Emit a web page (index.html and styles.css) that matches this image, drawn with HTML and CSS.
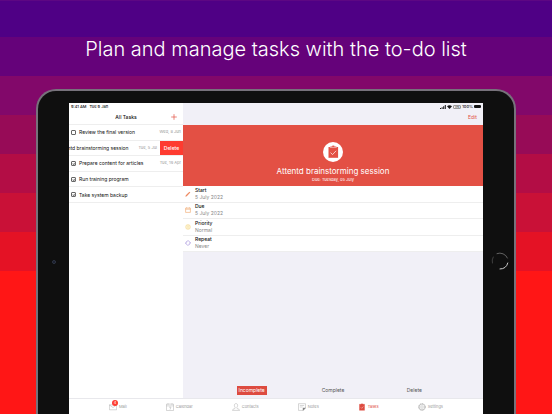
FILE: index.html
```html
<!DOCTYPE html>
<html lang="en">
  <head>
    <meta charset="UTF-8" />
    <meta name="viewport" content="width=device-width, initial-scale=1.0" />
    <title>Tasks</title>
    <link rel="stylesheet" href="styles.css">
  </head>
  <body>
    <h1 class="headline">Plan and manage tasks with the to-do list</h1>

    <div class="tablet">
      <span class="camera"></span>
      <svg class="home-button" viewBox="0 0 18 18" fill="none" stroke-linecap="round">
        <path d="M6 1.6A8 8 0 0 1 16.4 6" stroke="#777" stroke-width=".8" />
        <path d="M16.8 11A8 8 0 0 1 9 17" stroke="#ccc" stroke-width="1" />
        <path d="M1.4 11A8 8 0 0 1 2.2 5" stroke="#555" stroke-width=".7" />
      </svg>

      <div class="screen">
        <div class="panes">
          <section class="list-pane">
            <div class="status"><span>9:41 AM</span><span>Tue 9 Jan</span></div>
            <header class="bar">
              <h2>All Tasks</h2>
              <button class="add" aria-label="Add task">
                <svg viewBox="0 0 6 6" stroke="#e35044" stroke-width=".7"><path d="M3 .2v5.6M.2 3h5.6" /></svg>
              </button>
            </header>
            <ul class="tasks">
              <li>
                <input type="checkbox" id="task1">
                <label for="task1">Review the final version</label>
                <time>Wed, 8 Jun</time>
              </li>
              <li class="swiped">
                <span class="name">Attentd brainstorming session</span>
                <time>Tue, 5 Jul</time>
                <button class="delete">Delete</button>
              </li>
              <li>
                <input type="checkbox" id="task3" checked>
                <label for="task3">Prepare content for articles</label>
                <time>Tue, 19 Apr</time>
              </li>
              <li>
                <input type="checkbox" id="task4" checked>
                <label for="task4">Run training program</label>
              </li>
              <li>
                <input type="checkbox" id="task5" checked>
                <label for="task5">Take system backup</label>
              </li>
            </ul>
          </section>

          <section class="detail-pane">
            <div class="status status-right">
              <svg class="signal" viewBox="0 0 6 4" fill="#111"><path d="M0 3h1v1H0zM1.6 2.2h1V4h-1zM3.2 1.2h1V4h-1zM4.8 0h1v4h-1z" /></svg>
              <svg class="wifi" viewBox="0 0 5 4" fill="#111"><path d="M0 1.2Q2.5-.8 5 1.2L2.5 4z" /></svg>
              <span class="vpn">VPN</span>
              <span>100%</span>
              <span class="battery"></span>
            </div>
            <header class="bar">
              <button class="edit">Edit</button>
            </header>
            <div class="hero">
              <span class="hero-icon">
                <svg viewBox="0 0 20 20">
                  <path d="M5.5 5h9.6v10.8H5.5z" fill="#e35044" />
                  <path d="M7.2 5.4V4.2h1.5Q10.3 2.4 11.8 4.2h1.6v1.2z" fill="#e35044" stroke="#fff" stroke-width=".5" />
                  <path d="M7.6 10.6l1.9 2 3.6-3.8" fill="none" stroke="#fff" stroke-width=".7" />
                </svg>
              </span>
              <h3>Attentd brainstorming session</h3>
              <p>Due: Tuesday, 05 July</p>
            </div>
            <dl class="fields">
              <div>
                <svg viewBox="0 0 6 6"><path d="M.4 5.7l.4-1.5L4.4.7l.9.8L1.8 5.2z" fill="#ee8a62" /></svg>
                <dt>Start</dt>
                <dd>5 July 2022</dd>
              </div>
              <div>
                <svg viewBox="0 0 6 6" fill="none" stroke="#f0a566" stroke-width=".6"><path d="M.6 1.1h4.8v4.3H.6zM.6 2.2h4.8M1.6.3v.8M4.4.3v.8" /></svg>
                <dt>Due</dt>
                <dd>5 July 2022</dd>
              </div>
              <div>
                <svg viewBox="0 0 6 6" fill="#fdf3d0" stroke="#f3d58a" stroke-width=".5"><circle cx="3" cy="3" r="2.4" /><path d="M3 1.6v2M3 4v.5" /></svg>
                <dt>Priority</dt>
                <dd>Normal</dd>
              </div>
              <div>
                <svg viewBox="0 0 6 6" fill="none" stroke="#9a84d6" stroke-width=".6"><path d="M.9 3.4A2.2 2.2 0 0 1 4.7 1.6M5.1 2.6A2.2 2.2 0 0 1 1.3 4.4M.2 2.8l.7.8.8-.8M5.8 3.2l-.7-.8-.8.8" /></svg>
                <dt>Repeat</dt>
                <dd>Never</dd>
              </div>
            </dl>
            <div class="actions">
              <button class="active">Incomplete</button>
              <button>Complete</button>
              <button>Delete</button>
            </div>
          </section>
        </div>

        <nav class="tabs">
          <a href="#mail">
            <svg viewBox="0 0 8 8"><path d="M.4 1.9h7.2v4.9H.4zM.4 1.9L4 4.6l3.6-2.7" /></svg>
            Mail
            <span class="badge">4</span>
          </a>
          <a href="#calendar">
            <svg viewBox="0 0 8 8"><path d="M.5 1.1h7v6.4h-7zM.5 2.9h7M2 .3v1.4M6 .3v1.4M3 4.2h2L4 6.6" /></svg>
            Calendar
          </a>
          <a href="#contacts">
            <svg viewBox="0 0 8 8"><path d="M4 .6C2.6.6 2.3 1.6 2.4 2.7c.1 1 .5 1.5.8 1.9.1.7-.2.9-1 1.2C1 6.2.5 6.6.4 7.4h7.2C7.5 6.6 7 6.2 5.8 5.8 5 5.5 4.7 5.3 4.8 4.6c.3-.4.7-.9.8-1.9C5.7 1.6 5.4.6 4 .6z" /></svg>
            Contacts
          </a>
          <a href="#notes">
            <svg viewBox="0 0 8 8"><path d="M.5.7h7v4.2L5 7.4H.5zM1.8 2.5h4.4M1.8 4h3" /><path d="M5 7.4V5h2.5z" fill="#888" stroke="#777" /></svg>
            Notes
          </a>
          <a href="#tasks" class="current">
            <svg viewBox="0 0 8 8"><path d="M1.5 1.3h1.2Q4 0 5.3 1.3h1.2v6h-5z" fill="#dd4b40" stroke="#dd4b40" /><path d="M2.8 4.4l.9.9 1.7-1.8" stroke="#fff" /></svg>
            Tasks
          </a>
          <a href="#settings">
            <svg viewBox="0 0 8 8"><circle cx="4" cy="4" r="3.3" stroke-width=".7" stroke-dasharray="1.5 .6" /><circle cx="4" cy="4" r="2.8" /><circle cx="4" cy="4" r="1.3" /></svg>
            Settings
          </a>
        </nav>
      </div>
    </div>
  </body>
</html>
```

FILE: styles.css
```css
* {
  box-sizing: border-box;
  margin: 0;
  padding: 0;
}

body {
  min-height: 100vh;
  display: flex;
  flex-direction: column;
  font-family: Inter, "Liberation Sans", sans-serif;
  font-size: 5px;
  line-height: 8px;
  color: #111;
  background: linear-gradient(
    #5d0783 0 1px,
    #4f0085 1px 37px,
    #65027a 37px 76px,
    #82086a 76px 115px,
    #970b57 115px 154px,
    #b30d45 154px 193px,
    #c91137 193px 232px,
    #e41225 232px 271px,
    #ff1616 271px
  );
}

button {
  border: none;
  background: none;
  font: inherit;
  color: inherit;
  cursor: pointer;
}

svg {
  display: block;
  flex: none;
}

.headline {
  height: 89px;
  padding-top: 36px;
  font-size: 20px;
  line-height: 26px;
  font-weight: 300;
  text-align: center;
  color: #fff;
}

.tablet {
  position: relative;
  flex: 1;
  display: flex;
  margin: 0 36px;
  padding: 12px 31px 0;
  border: 2px solid #77727b;
  border-bottom: none;
  border-radius: 20px 20px 0 0;
  background: #0f0f0f;
}

.camera {
  position: absolute;
  left: 14px;
  top: 169px;
  width: 4px;
  height: 4px;
  border: 1px solid #303645;
  border-radius: 50%;
  background: #15192a;
}

.home-button {
  position: absolute;
  right: 5px;
  top: 161px;
  width: 18px;
  height: 18px;
}

.screen {
  flex: 1;
  display: flex;
  flex-direction: column;
  background: #fff;
}

.panes {
  flex: 1;
  display: flex;
}

.list-pane {
  width: 114px;
  overflow: hidden;
}

.detail-pane {
  flex: 1;
  display: flex;
  flex-direction: column;
  background: #f1f0f7;
}

.status {
  display: flex;
  gap: 3px;
  height: 7px;
  padding: 0 2px;
  font-size: 4px;
  line-height: 7px;
  font-weight: 500;
}

.status-right {
  justify-content: flex-end;
  align-items: center;
  gap: 1px;
}

.signal {
  width: 6px;
  height: 4px;
}

.wifi {
  width: 5px;
  height: 4px;
}

.vpn {
  padding: 0 1px;
  border: 1px solid #999;
  border-radius: 1px;
  font-size: 2px;
  line-height: 2px;
}

.battery {
  width: 7px;
  height: 3px;
  border-radius: 1px;
  background: #111;
}

.bar {
  position: relative;
  display: flex;
  justify-content: center;
  height: 15px;
  line-height: 14px;
}

.list-pane .bar {
  border-bottom: 1px solid #eee;
}

.bar h2 {
  font-size: 5px;
  font-weight: 500;
}

.add,
.edit {
  position: absolute;
  right: 6px;
  top: 0;
  height: 14px;
  color: #e35044;
}

.add svg {
  width: 6px;
  height: 6px;
}

.tasks {
  display: grid;
  grid-template-columns: minmax(0, 1fr);
  grid-auto-rows: 1fr;
  height: 78px;
  list-style: none;
}

.tasks li {
  display: flex;
  align-items: center;
  gap: 3px;
  padding: 0 2px;
  border-bottom: 1px solid #eee;
  white-space: nowrap;
}

.tasks input {
  appearance: none;
  position: relative;
  flex: none;
  width: 5px;
  height: 5px;
  border: 1px solid #666;
  border-radius: 1px;
}

.tasks input:checked::after {
  content: "";
  position: absolute;
  left: 1px;
  top: 0;
  width: 1px;
  height: 2px;
  border: solid #888;
  border-width: 0 1px 1px 0;
  transform: rotate(45deg);
}

.tasks time {
  margin-left: auto;
  font-size: 4px;
  color: #999;
}

/* the row is pulled left to show its delete button */
.tasks .swiped {
  justify-content: flex-end;
  padding: 0;
}

.swiped time {
  margin-left: 7px;
}

.tasks .delete {
  align-self: stretch;
  width: 23px;
  flex: none;
  font-weight: 500;
  color: #fff;
  background: #fe3b30;
}

.hero {
  display: flex;
  flex-direction: column;
  align-items: center;
  height: 61px;
  padding-top: 17px;
  color: #fff;
  background: #e35044;
}

.hero-icon {
  width: 20px;
  height: 20px;
  border-radius: 50%;
  background: #fff;
}

.hero h3 {
  margin-top: 4px;
  font-size: 8px;
  line-height: 10px;
  font-weight: 400;
}

.hero p {
  font-size: 4px;
}

.fields {
  display: grid;
  grid-auto-rows: 1fr;
  height: 66px;
  background: #fff;
}

.fields div {
  display: grid;
  grid-template-columns: 6px 1fr;
  column-gap: 4px;
  align-content: center;
  align-items: center;
  padding-left: 2px;
  line-height: 7px;
  border-bottom: 1px solid #eee;
}

.fields svg {
  grid-row: span 2;
  width: 6px;
  height: 6px;
}

.fields dt {
  font-weight: 500;
}

.fields dd {
  color: #888;
}

.actions {
  display: grid;
  grid-template-columns: repeat(3, 1fr);
  justify-items: center;
  margin-top: auto;
  padding: 0 28px 3px;
  color: #555;
}

.actions button {
  height: 9px;
  padding: 0 2px;
  line-height: 9px;
}

.actions .active {
  color: #fff;
  background: #dd4b40;
}

.tabs {
  display: flex;
  justify-content: space-between;
  align-items: center;
  height: 16px;
  padding: 0 40px;
  border-top: 1px solid #e8e8ec;
}

.tabs a {
  position: relative;
  display: flex;
  align-items: center;
  gap: 2px;
  font-size: 4px;
  color: #999;
  text-decoration: none;
}

.tabs svg {
  width: 8px;
  height: 8px;
  fill: none;
  stroke: #999;
  stroke-width: .4;
}

.tabs .current {
  color: #dd4b40;
}

.badge {
  position: absolute;
  left: 3px;
  top: -3px;
  width: 6px;
  height: 6px;
  border-radius: 50%;
  font-size: 4px;
  line-height: 6px;
  text-align: center;
  color: #fff;
  background: #fe3b30;
}
```
